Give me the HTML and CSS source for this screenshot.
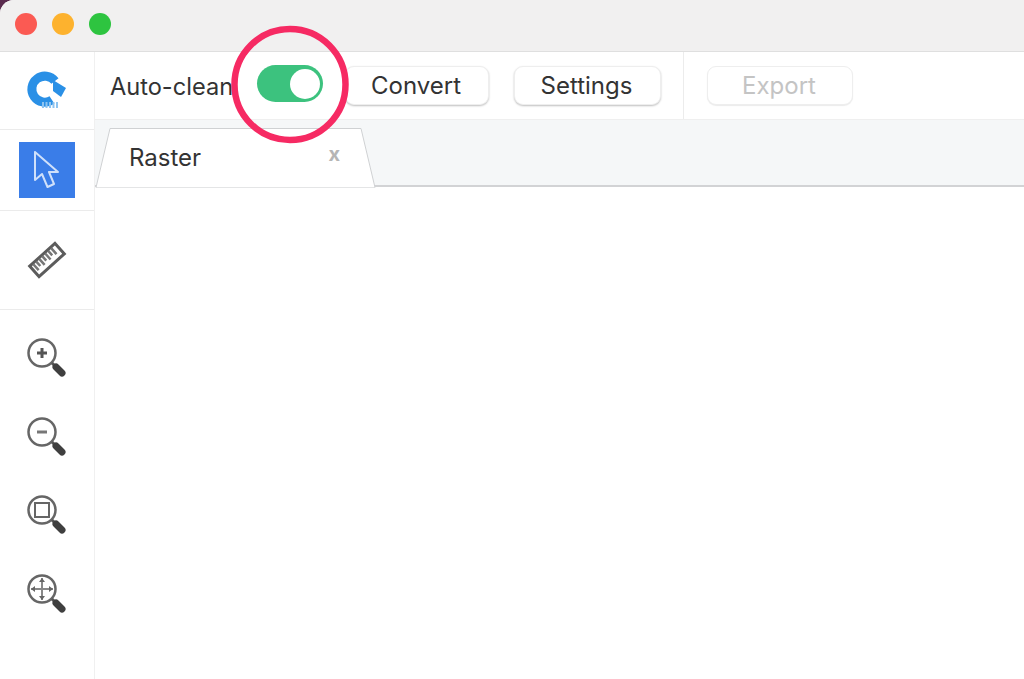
FILE: index.html
```html
<!DOCTYPE html>
<html lang="en">
<head>
    <meta charset="UTF-8" />
    <title>Raster</title>
    <link rel="stylesheet" href="styles.css">
</head>
<body>
    <div class="window">
        <div class="titlebar">
            <span class="light light-red"></span>
            <span class="light light-yellow"></span>
            <span class="light light-green"></span>
        </div>
        <div class="main">
            <div class="sidebar">
                <div class="side-row side-logo">
                    <svg width="44" height="44" viewBox="0 0 44 44">
                        <path d="M27 31 A13 13 0 1 1 30 12" fill="none" stroke="#2a90e6" stroke-width="9"/>
                        <path d="M28 11 L41 19 L36 28 L28 22 Z" fill="#2a90e6"/>
                        <path d="M17 36 L33 36" stroke="#8fc4f0" stroke-width="6" stroke-dasharray="2 1.500"/>
                    </svg>
                </div>
                <div class="side-row side-pointer">
                    <div class="pointer-box">
                        <svg width="28" height="38" viewBox="0 0 28 38">
                            <path d="M2 1 L2 29 L9 23 L14.500 36 L21 33 L16 21 L25 21 Z" fill="none" stroke="#cfe0fa" stroke-width="2" stroke-linejoin="round"/>
                        </svg>
                    </div>
                </div>
                <div class="side-row side-ruler">
                    <svg width="44" height="44" viewBox="0 0 44 44">
                        <g transform="rotate(-42 22 22)">
                            <rect x="5" y="15" width="34" height="14" fill="none" stroke="#5c5c5c" stroke-width="3"/>
                            <path d="M9 16 V24 M13 16 V22 M17 16 V24 M21 16 V22 M25 16 V24 M29 16 V22 M33 16 V24" stroke="#777" stroke-width="2.500"/>
                        </g>
                    </svg>
                </div>
                <div class="side-zooms">
                    <svg width="44" height="44" viewBox="0 0 44 44">
                        <circle cx="18" cy="17" r="13.500" fill="none" stroke="#666" stroke-width="2.500"/>
                        <path d="M28 27 L32 31" stroke="#555" stroke-width="3"/>
                        <path d="M32 31 L38 37" stroke="#3f3f3f" stroke-width="7" stroke-linecap="round"/>
                        <path d="M13 17 H23 M18 12 V22" stroke="#555" stroke-width="3"/>
                    </svg>
                    <svg width="44" height="44" viewBox="0 0 44 44">
                        <circle cx="18" cy="17" r="13.500" fill="none" stroke="#666" stroke-width="2.500"/>
                        <path d="M28 27 L32 31" stroke="#555" stroke-width="3"/>
                        <path d="M32 31 L38 37" stroke="#3f3f3f" stroke-width="7" stroke-linecap="round"/>
                        <path d="M13 17 H23" stroke="#777" stroke-width="3"/>
                    </svg>
                    <svg width="44" height="44" viewBox="0 0 44 44">
                        <circle cx="18" cy="17" r="13.500" fill="none" stroke="#666" stroke-width="2.500"/>
                        <path d="M28 27 L32 31" stroke="#555" stroke-width="3"/>
                        <path d="M32 31 L38 37" stroke="#3f3f3f" stroke-width="7" stroke-linecap="round"/>
                        <rect x="11" y="10" width="14" height="14" fill="none" stroke="#666" stroke-width="2"/>
                    </svg>
                    <svg width="44" height="44" viewBox="0 0 44 44">
                        <circle cx="18" cy="17" r="13.500" fill="none" stroke="#666" stroke-width="2.500"/>
                        <path d="M28 27 L32 31" stroke="#555" stroke-width="3"/>
                        <path d="M32 31 L38 37" stroke="#3f3f3f" stroke-width="7" stroke-linecap="round"/>
                        <path d="M7 17 H29 M18 6 V28" stroke="#888" stroke-width="2"/>
                        <path d="M7 17 L11 14 V20 Z M29 17 L25 14 V20 Z M18 6 L15 10 H21 Z M18 28 L15 24 H21 Z" fill="#666"/>
                    </svg>
                </div>
            </div>
            <div class="content">
                <div class="toolbar">
                    <div class="tool-group">
                        <span class="auto-label">Auto-clean</span>
                        <span class="switch"><span class="switch-knob"></span></span>
                        <button class="btn btn-convert" type="button">Convert</button>
                        <button class="btn btn-settings" type="button">Settings</button>
                    </div>
                    <div class="tool-group tool-export">
                        <button class="btn btn-export" type="button" disabled>Export</button>
                    </div>
                </div>
                <div class="tabstrip">
                    <div class="tab">
                        <svg class="tab-shape" width="281" height="61" viewBox="0 0 281 61">
                            <path d="M1 59.500 L15 0.500 H266 L280 59.500 Z" fill="#fff"/>
                            <path d="M1 59.500 H280" fill="none" stroke="#e4e5e6"/>
                            <path d="M1 59.500 L15 0.500 H266 L280 59.500" fill="none" stroke="#cfd1d3"/>
                        </svg>
                        <span class="tab-name">Raster</span>
                        <span class="tab-close">x</span>
                    </div>
                </div>
                <div class="canvas"></div>
            </div>
        </div>
        <svg class="highlight" width="124" height="124" viewBox="0 0 124 124">
            <circle cx="62" cy="61.500" r="55.500" fill="none" stroke="#f62a63" stroke-width="6.500"/>
        </svg>
    </div>
</body>
</html>
```

FILE: styles.css
```css
/* page */
body {
    margin: 0;
    padding: 0;
    height: 100vh;
    overflow: hidden;
    background: #5a2a4e;
    font-family: Inter, "Liberation Sans", sans-serif;
    color: #333;
}

.window {
    position: relative;
    display: flex;
    flex-direction: column;
    height: 100%;
    background: #fff;
    border-top-left-radius: 14px;
    overflow: hidden;
}

/* title bar */
.titlebar {
    display: flex;
    align-items: center;
    gap: 15px;
    height: 52px;
    padding: 0 0 3px 15px;
    box-sizing: border-box;
    flex-shrink: 0;
    background: #f1f0f0;
    border-bottom: 1px solid #dfdfdf;
}

.light {
    width: 22px;
    height: 22px;
    border-radius: 50%;
}

.light-red { background: #fb5a53; }
.light-yellow { background: #fdb22e; }
.light-green { background: #2ec440; }

.main {
    display: flex;
    flex: 1;
    min-height: 0;
}

/* left tools */
.sidebar {
    width: 95px;
    flex-shrink: 0;
    box-sizing: border-box;
    border-right: 1px solid #f0f0f0;
    display: flex;
    flex-direction: column;
}

.side-row {
    display: flex;
    align-items: center;
    justify-content: center;
    box-sizing: border-box;
    border-bottom: 1px solid #ebebeb;
}

.side-logo { height: 78px; }
.side-pointer { height: 81px; }
.side-ruler { height: 99px; }

.pointer-box {
    display: flex;
    align-items: center;
    justify-content: center;
    width: 56px;
    height: 56px;
    background: #3a7de8;
}

.side-zooms {
    display: flex;
    flex-direction: column;
    gap: 34.500px;
    padding: 26px 0 0 24px;
}

/* toolbar */
.content {
    flex: 1;
    display: flex;
    flex-direction: column;
    min-width: 0;
}

.toolbar {
    display: flex;
    height: 68px;
    flex-shrink: 0;
    box-sizing: border-box;
    border-bottom: 1px solid #efefef;
}

.tool-group {
    display: flex;
    align-items: center;
    padding-left: 15px;
    padding-right: 22px;
    border-right: 1px solid #ececec;
}

.tool-export {
    border-right: none;
    padding-left: 23px;
}

.auto-label {
    font-size: 23.600px;
    width: 147px;
    margin-top: 1px;
    white-space: nowrap;
}

.switch {
    display: flex;
    align-items: center;
    justify-content: flex-end;
    width: 66px;
    height: 37px;
    padding-right: 3px;
    box-sizing: border-box;
    border-radius: 19px;
    background: #3cc27e;
    margin-right: 22px;
    margin-bottom: 4px;
}

.switch-knob {
    width: 30px;
    height: 30px;
    border-radius: 50%;
    background: #fff;
}

.btn {
    height: 39px;
    box-sizing: border-box;
    padding: 0 2px 0 0;
    font-family: inherit;
    font-size: 24px;
    color: #333;
    background: #fff;
    border: 1px solid #eee;
    border-radius: 9px;
    box-shadow: 0 1px 2px rgba(0, 0, 0, 0.25);
}

.btn-convert { width: 144px; margin-right: 25px; }
.btn-settings { width: 147px; }

.btn-export {
    width: 146px;
    color: #c4c4c4;
    box-shadow: 0 1px 1px rgba(0, 0, 0, 0.08);
}

/* tabs */
.tabstrip {
    height: 67px;
    flex-shrink: 0;
    box-sizing: border-box;
    padding-top: 8px;
    background: #f5f7f8;
    border-bottom: 2px solid #d2d3d5;
}

.tab {
    position: relative;
    display: flex;
    align-items: center;
    justify-content: space-between;
    width: 281px;
    height: 60px;
    padding: 0 36px 0 34px;
    box-sizing: border-box;
}

.tab-shape {
    position: absolute;
    left: 0;
    top: 0;
}

.tab-name {
    position: relative;
    top: -1px;
    font-size: 24px;
}

.tab-close {
    position: relative;
    top: -4px;
    font-size: 20px;
    font-weight: 700;
    color: #b5b5b5;
}

.canvas {
    flex: 1;
    background: #fff;
}

/* annotation ring */
.highlight {
    position: absolute;
    left: 228px;
    top: 23px;
}
```
